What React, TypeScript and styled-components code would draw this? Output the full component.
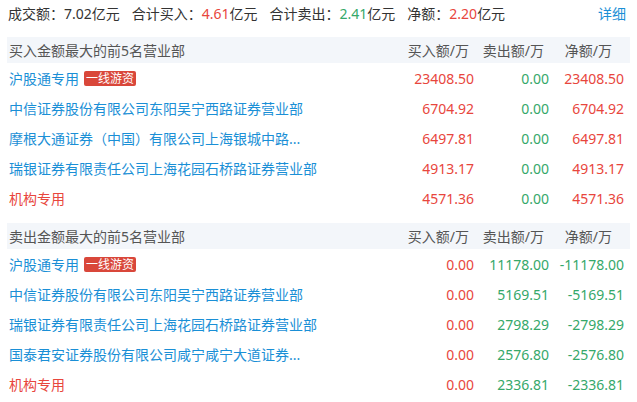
import React from "react";
import styled, { createGlobalStyle } from "styled-components";

const GlobalStyle = createGlobalStyle`
  body {
    margin: 0;
    background: #fff;
    font-family: "Noto Sans", "Noto Sans CJK SC", sans-serif;
  }
`;

const RED = "#e8463d";
const GREEN = "#35a86a";
const BLUE = "#1a8fd6";

type Tone = "red" | "green" | "blue" | "dark";

const toneColor = (t: Tone) =>
  t === "red" ? RED : t === "green" ? GREEN : t === "blue" ? BLUE : "#333";

const Wrapper = styled.div`
  width: 623px;
  padding: 0 7px;
  font-size: 14px;
  color: #333;
`;

const Summary = styled.div`
  display: flex;
  align-items: center;
  height: 25px;
  margin-bottom: 12px;
  padding-left: 1px;
  white-space: nowrap;
`;

const SummaryItem = styled.span`
  margin-right: 12px;
`;

const Num = styled.span<{ $tone: Tone }>`
  color: ${(p) => toneColor(p.$tone)};
`;

const DetailLink = styled.a`
  margin-left: auto;
  margin-right: 4px;
  color: ${BLUE};
  text-decoration: none;
  cursor: pointer;
`;

const Section = styled.div<{ $gap?: number }>`
  margin-top: ${(p) => p.$gap || 0}px;
`;

const Grid = styled.div`
  display: grid;
  grid-template-columns: 1fr 75px 75px 75px;
  align-items: center;
  padding: 0 6px 0 2px;
`;

const HeadRow = styled(Grid)`
  height: 26px;
  background: #f3f6fa;
  color: #555;
`;

const BodyRow = styled(Grid)`
  height: 30px;
`;

const HeadCell = styled.div<{ $pr?: number }>`
  text-align: right;
  padding-right: ${(p) => p.$pr || 0}px;
  white-space: nowrap;
`;

const NameCell = styled.div<{ $tone: Tone }>`
  display: flex;
  align-items: center;
  color: ${(p) => toneColor(p.$tone)};
  white-space: nowrap;
  overflow: hidden;
  cursor: pointer;
`;

const Badge = styled.span`
  display: inline-block;
  margin-left: 5px;
  padding: 0 2px;
  height: 15px;
  line-height: 15px;
  font-size: 12px;
  color: #fff;
  background: #d9473a;
  border-radius: 2px;
`;

const ValueCell = styled.div<{ $tone: Tone }>`
  text-align: right;
  color: ${(p) => toneColor(p.$tone)};
  white-space: nowrap;
`;

interface Row {
  name: string;
  institution?: boolean;
  badge?: string;
  buy: string;
  sell: string;
  net: string;
}

const buyRows: Row[] = [
  { name: "沪股通专用", badge: "一线游资", buy: "23408.50", sell: "0.00", net: "23408.50" },
  { name: "中信证券股份有限公司东阳吴宁西路证券营业部", buy: "6704.92", sell: "0.00", net: "6704.92" },
  { name: "摩根大通证券（中国）有限公司上海银城中路...", buy: "6497.81", sell: "0.00", net: "6497.81" },
  { name: "瑞银证券有限责任公司上海花园石桥路证券营业部", buy: "4913.17", sell: "0.00", net: "4913.17" },
  { name: "机构专用", institution: true, buy: "4571.36", sell: "0.00", net: "4571.36" },
];

const sellRows: Row[] = [
  { name: "沪股通专用", badge: "一线游资", buy: "0.00", sell: "11178.00", net: "-11178.00" },
  { name: "中信证券股份有限公司东阳吴宁西路证券营业部", buy: "0.00", sell: "5169.51", net: "-5169.51" },
  { name: "瑞银证券有限责任公司上海花园石桥路证券营业部", buy: "0.00", sell: "2798.29", net: "-2798.29" },
  { name: "国泰君安证券股份有限公司咸宁咸宁大道证券...", buy: "0.00", sell: "2576.80", net: "-2576.80" },
  { name: "机构专用", institution: true, buy: "0.00", sell: "2336.81", net: "-2336.81" },
];

const Table = ({ title, rows }: { title: string; rows: Row[] }) => (
  <>
    <HeadRow>
      <div>{title}</div>
      <HeadCell $pr={5}>买入额/万</HeadCell>
      <HeadCell $pr={5}>卖出额/万</HeadCell>
      <HeadCell $pr={12}>净额/万</HeadCell>
    </HeadRow>
    {rows.map((r, i) => {
      const netTone: Tone = r.net.startsWith("-") ? "green" : "red";
      return (
        <BodyRow key={i}>
          <NameCell $tone={r.institution ? "red" : "blue"}>
            {r.name}
            {r.badge && <Badge>{r.badge}</Badge>}
          </NameCell>
          <ValueCell $tone="red">{r.buy}</ValueCell>
          <ValueCell $tone="green">{r.sell}</ValueCell>
          <ValueCell $tone={netTone}>{r.net}</ValueCell>
        </BodyRow>
      );
    })}
  </>
);

export default function App() {
  return (
    <Wrapper>
      <GlobalStyle />
      <Summary>
        <SummaryItem>
          成交额：7.02亿元
        </SummaryItem>
        <SummaryItem>
          合计买入：<Num $tone="red">4.61</Num>亿元
        </SummaryItem>
        <SummaryItem>
          合计卖出：<Num $tone="green">2.41</Num>亿元
        </SummaryItem>
        <SummaryItem>
          净额：<Num $tone="red">2.20</Num>亿元
        </SummaryItem>
        <DetailLink>详细</DetailLink>
      </Summary>
      <Section>
        <Table title="买入金额最大的前5名营业部" rows={buyRows} />
      </Section>
      <Section $gap={10}>
        <Table title="卖出金额最大的前5名营业部" rows={sellRows} />
      </Section>
    </Wrapper>
  );
}
